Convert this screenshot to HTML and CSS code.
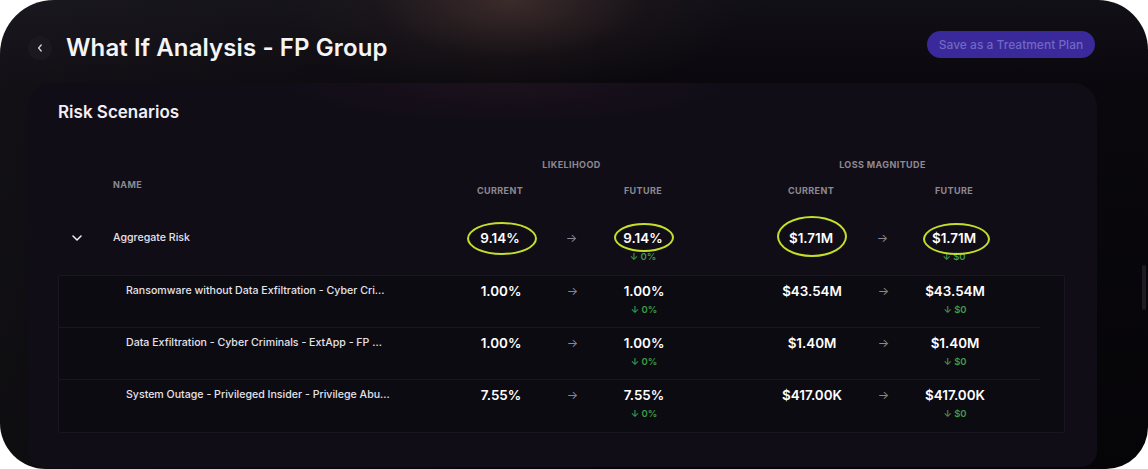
FILE: index.html
```html
<!DOCTYPE html>
<html lang="en">
<head>
<meta charset="utf-8">
<title>What If Analysis - FP Group</title>
<link rel="stylesheet" href="styles.css">
</head>
<body>
<div class="frame">
  <header class="topbar">
    <button class="back" aria-label="Back">
      <svg width="10" height="10" viewBox="0 0 10 10"><path d="M6.2 2 L3.6 5 L6.2 8" fill="none" stroke="#cfcbd4" stroke-width="1.4" stroke-linecap="round" stroke-linejoin="round"/></svg>
    </button>
    <h1 class="title">What If Analysis - FP Group</h1>
    <button class="save">Save as a Treatment Plan</button>
  </header>

  <section class="card">
    <h2 class="card-title">Risk Scenarios</h2>
    <div class="table">
      <div class="thead">
        <div class="th name-h">NAME</div>
        <div class="th g-like">LIKELIHOOD</div>
        <div class="th g-loss">LOSS MAGNITUDE</div>
        <div class="th c3">CURRENT</div>
        <div class="th c5">FUTURE</div>
        <div class="th c7">CURRENT</div>
        <div class="th c9">FUTURE</div>
      </div>

      <div class="row agg">
        <div class="expand"><svg width="10" height="6" viewBox="0 0 10 6"><path d="M1 1 L5 5 L9 1" fill="none" stroke="#f2f0f5" stroke-width="1.5" stroke-linecap="round" stroke-linejoin="round"/></svg></div>
        <div class="name">Aggregate Risk</div>
        <div class="val"><span class="num">9.14%<span class="ring r1"></span></span></div>
        <div class="arrow">→</div>
        <div class="val"><span class="num">9.14%<span class="ring r2"></span></span><span class="delta">↓ 0%</span></div>
        <div class="val c7v"><span class="num">$1.71M<span class="ring r3"></span></span></div>
        <div class="arrow c8a">→</div>
        <div class="val"><span class="num">$1.71M<span class="ring r4"></span></span><span class="delta">↓ $0</span></div>
      </div>

      <div class="subrows">
        <div class="row sub">
          <div class="name">Ransomware without Data Exfiltration - Cyber Cri...</div>
          <div class="val"><span class="num">1.00%</span></div>
          <div class="arrow">→</div>
          <div class="val"><span class="num">1.00%</span><span class="delta">↓ 0%</span></div>
          <div class="val c7v"><span class="num">$43.54M</span></div>
          <div class="arrow c8a">→</div>
          <div class="val"><span class="num">$43.54M</span><span class="delta">↓ $0</span></div>
        </div>
        <div class="row sub">
          <div class="name">Data Exfiltration - Cyber Criminals - ExtApp - FP ...</div>
          <div class="val"><span class="num">1.00%</span></div>
          <div class="arrow">→</div>
          <div class="val"><span class="num">1.00%</span><span class="delta">↓ 0%</span></div>
          <div class="val c7v"><span class="num">$1.40M</span></div>
          <div class="arrow c8a">→</div>
          <div class="val"><span class="num">$1.40M</span><span class="delta">↓ $0</span></div>
        </div>
        <div class="row sub">
          <div class="name">System Outage - Privileged Insider - Privilege Abu...</div>
          <div class="val"><span class="num">7.55%</span></div>
          <div class="arrow">→</div>
          <div class="val"><span class="num">7.55%</span><span class="delta">↓ 0%</span></div>
          <div class="val c7v"><span class="num">$417.00K</span></div>
          <div class="arrow c8a">→</div>
          <div class="val"><span class="num">$417.00K</span><span class="delta">↓ $0</span></div>
        </div>
      </div>
    </div>
  </section>
  <div class="scroll-thumb"></div>
</div>
</body>
</html>
```

FILE: styles.css
```css
* { box-sizing: border-box; margin: 0; padding: 0; }

body {
  background: #ffffff;
  font-family: Inter, "Noto Sans", "DejaVu Sans", sans-serif;
}

.frame {
  --cols: 38px 354px 100px 43px 100px 68px 100px 43px 100px 1fr;
  position: relative;
  width: 1148px;
  height: 469px;
  border-radius: 54px 50px 42px 46px;
  overflow: hidden;
  display: flex;
  flex-direction: column;
  background:
    radial-gradient(ellipse 230px 100px at 510px 0, rgba(92, 64, 58, 0.55), rgba(50, 34, 34, 0.18) 60%, rgba(0,0,0,0) 100%),
    linear-gradient(90deg, rgba(255,255,255,0.035) 0%, rgba(255,255,255,0) 55%),
    linear-gradient(180deg, #121017 0px, #0a080d 85px, #050407 100%);
}

.topbar {
  height: 83px;
  flex: none;
  display: flex;
  align-items: center;
  padding: 12px 53px 0 28px;
}

.back {
  width: 24px;
  height: 24px;
  border: none;
  border-radius: 50%;
  background: #1b191f;
  display: grid;
  place-items: center;
}

.title {
  margin-left: 14px;
  font-size: 24px;
  font-weight: 600;
  letter-spacing: 0.1px;
  color: #f5f4f7;
  line-height: 30px;
}

.save {
  margin-left: auto;
  margin-top: -6px;
  width: 168px;
  height: 27px;
  border: none;
  border-radius: 14px;
  background: #39299a;
  color: #7267c0;
  font-family: inherit;
  font-size: 12px;
  font-weight: 500;
}

.card {
  flex: 1;
  margin: 0 51px 2px 28px;
  border-radius: 24px 24px 16px 16px;
  background:
    radial-gradient(ellipse 220px 40px at 480px 0, rgba(60, 30, 48, 0.25), rgba(0,0,0,0) 100%),
    #110d17;
  padding: 18px 32px 0 30px;
}

.card-title {
  font-size: 17px;
  font-weight: 600;
  line-height: 22px;
  color: #f1eff4;
}

.table { margin-top: 29px; }

.thead {
  display: grid;
  grid-template-columns: var(--cols);
  grid-template-rows: 25px 26px;
  align-items: center;
}

.th {
  font-size: 9px;
  font-weight: 700;
  letter-spacing: 0.4px;
  color: #8c8992;
  text-align: center;
}

.name-h {
  grid-column: 2;
  grid-row: 1 / 3;
  text-align: left;
  padding-left: 17px;
  padding-top: 14px;
}
.g-like { grid-column: 3 / 6; grid-row: 1; }
.g-loss { grid-column: 7 / 10; grid-row: 1; }
.c3 { grid-column: 3; grid-row: 2; }
.c5 { grid-column: 5; grid-row: 2; }
.c7 { grid-column: 7; grid-row: 2; }
.c9 { grid-column: 9; grid-row: 2; }

.row {
  display: grid;
  grid-template-columns: var(--cols);
  align-items: start;
}

.row.agg {
  height: 72px;
  padding-top: 26px;
}

.expand {
  grid-column: 1;
  height: 18px;
  display: flex;
  align-items: center;
  justify-content: center;
}

.name {
  grid-column: 2;
  font-size: 10.6px;
  font-weight: 500;
  line-height: 18px;
  color: #e4e2e8;
  padding-left: 17px;
  white-space: nowrap;
}

.sub .name { padding-left: 29px; }

.val {
  display: flex;
  flex-direction: column;
  align-items: center;
}

.c7v { grid-column: 7; }

.num {
  position: relative;
  display: inline-block;
  font-size: 13.4px;
  font-weight: 600;
  line-height: 18px;
  color: #ffffff;
  white-space: nowrap;
}

.delta {
  margin-top: 4px;
  font-size: 9.5px;
  font-weight: 600;
  line-height: 12px;
  color: #3f9b47;
}

.arrow {
  text-align: center;
  font-size: 12px;
  line-height: 18px;
  color: #8b8891;
}

.c8a { grid-column: 8; }

.ring {
  position: absolute;
  left: 50%;
  top: 50%;
  border: 2.5px solid #c4df2a;
  border-radius: 50%;
  pointer-events: none;
}
.r1 { width: 70px; height: 33px; margin: -16px 0 0 -33px; }
.r2 { width: 60px; height: 29px; margin: -15px 0 0 -29px; }
.r3 { width: 70px; height: 41px; margin: -22px 0 0 -34px; }
.r4 { width: 67px; height: 32px; margin: -15px 0 0 -31px; }

.subrows {
  border: 1px solid #19161f;
  background: #0d0b12;
  border-radius: 2px;
}

.row.sub {
  height: 52px;
  padding-top: 6px;
  margin-right: 24px;
  border-bottom: 1px solid #19161f;
}

.row.sub:last-child { border-bottom: none; }

.scroll-thumb {
  position: absolute;
  right: 2px;
  top: 265px;
  width: 4px;
  height: 45px;
  border-radius: 2px;
  background: #1e1c22;
}
```
